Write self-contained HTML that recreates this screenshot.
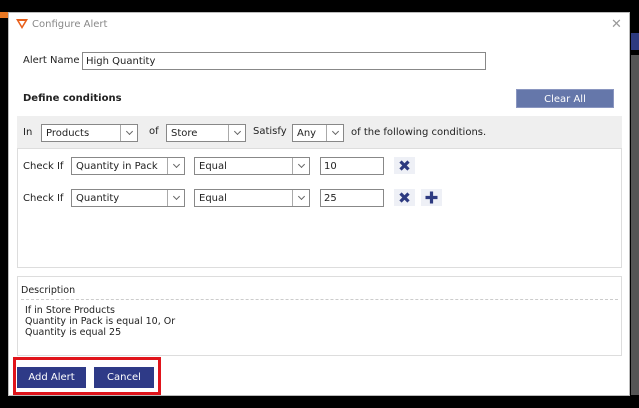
<!DOCTYPE html>
<html><head><style>
*{box-sizing:border-box;margin:0;padding:0}
body{width:639px;height:408px;background:#000;position:relative;overflow:hidden;font-family:"DejaVu Sans","Liberation Sans",sans-serif;font-size:10px;color:#222}
.a{position:absolute}
.dlg{left:8px;top:12px;width:622px;height:384px;background:#fff;border:1px solid #bbb}
.sel{position:absolute;height:18px;border:1px solid #888;background:#fff;padding:3px 4px 1px;font-size:10px}
.sel:after{content:"";position:absolute;right:0;top:0;width:16px;height:16px;border-left:1px solid #aaa;background:#fff}
.sel i{position:absolute;right:5px;top:4px;width:5px;height:5px;border-right:1px solid #666;border-bottom:1px solid #666;transform:rotate(45deg);z-index:2}
.inp{position:absolute;height:18px;border:1px solid #888;background:#fff;padding:3px 3px 1px;font-size:10px}
.btn{position:absolute;color:#fff;text-align:center;font-size:10px}
.ic{position:absolute;width:21px;height:17px;background:#eef0f6}
</style></head><body>
<div class="a" style="left:0;top:12px;width:8px;height:6px;background:#e87722"></div>
<div class="a" style="left:631px;top:33px;width:8px;height:17px;background:#2d3a80"></div>
<div class="a" style="left:631px;top:55px;width:8px;height:340px;background:#555"></div>
<div class="a dlg"></div>
<svg class="a" style="left:16px;top:19px" width="12" height="10" viewBox="0 0 12 10"><path d="M0 0h12l-6 10z" fill="#e8601c"/><path d="M3 2h6l-3 5z" fill="#fff"/></svg>
<div class="a" style="left:32px;top:19px;color:#888;font-size:10px">Configure Alert</div>
<div class="a" style="left:611px;top:17px;color:#999;font-size:13px">✕</div>
<div class="a" style="left:23px;top:55px">Alert Name</div>
<div class="inp" style="left:82px;top:52px;width:404px">High Quantity</div>
<div class="a" style="left:23px;top:93px;font-weight:bold">Define conditions</div>
<div class="btn" style="left:516px;top:89px;width:98px;height:19px;background:#6577aa;line-height:19px;border:1px solid #8a96c0">Clear All</div>
<div class="a" style="left:17px;top:116px;width:605px;height:33px;background:#efefef;border-bottom:1px solid #ddd"></div>
<div class="a" style="left:23px;top:127px">In</div>
<div class="sel" style="left:41px;top:124px;width:97px">Products<i></i></div>
<div class="a" style="left:149px;top:126px">of</div>
<div class="sel" style="left:166px;top:124px;width:80px">Store<i></i></div>
<div class="a" style="left:253px;top:126px">Satisfy</div>
<div class="sel" style="left:292px;top:124px;width:52px">Any<i></i></div>
<div class="a" style="left:351px;top:127px">of the following conditions.</div>
<div class="a" style="left:17px;top:148px;width:605px;height:120px;border:1px solid #ddd;border-top:none"></div>
<div class="a" style="left:23px;top:161px">Check If</div>
<div class="sel" style="left:71px;top:157px;width:114px">Quantity in Pack<i></i></div>
<div class="sel" style="left:194px;top:157px;width:116px">Equal<i></i></div>
<div class="inp" style="left:320px;top:157px;width:64px">10</div>
<div class="ic" style="left:394px;top:157px"><svg width="21" height="17"><path d="M6.5 4.5l8 8M14.5 4.5l-8 8" stroke="#2d3a80" stroke-width="3.2"/></svg></div>
<div class="a" style="left:23px;top:193px">Check If</div>
<div class="sel" style="left:71px;top:189px;width:114px">Quantity<i></i></div>
<div class="sel" style="left:194px;top:189px;width:116px">Equal<i></i></div>
<div class="inp" style="left:320px;top:189px;width:64px">25</div>
<div class="ic" style="left:394px;top:189px"><svg width="21" height="17"><path d="M6.5 4.5l8 8M14.5 4.5l-8 8" stroke="#2d3a80" stroke-width="3.2"/></svg></div>
<div class="ic" style="left:421px;top:189px"><svg width="21" height="17"><path d="M10.5 2.5v12M4.5 8.5h12" stroke="#2d3a80" stroke-width="3.2"/></svg></div>
<div class="a" style="left:17px;top:276px;width:605px;height:80px;border:1px solid #ddd"></div>
<div class="a" style="left:21px;top:285px;font-size:9.5px">Description</div>
<div class="a" style="left:21px;top:299px;width:597px;border-top:1px dashed #ccc"></div>
<div class="a" style="left:25px;top:305px;font-size:9.5px;line-height:11px">If in Store Products<br>Quantity in Pack is equal 10, Or<br>Quantity is equal 25</div>
<div class="btn" style="left:17px;top:367px;width:69px;height:21px;line-height:21px;background:#2e3a87">Add Alert</div>
<div class="btn" style="left:94px;top:367px;width:60px;height:21px;line-height:21px;background:#2e3a87">Cancel</div>
<div class="a" style="left:13px;top:357px;width:148px;height:38px;border:3px solid #e0141b"></div>
</body></html>
